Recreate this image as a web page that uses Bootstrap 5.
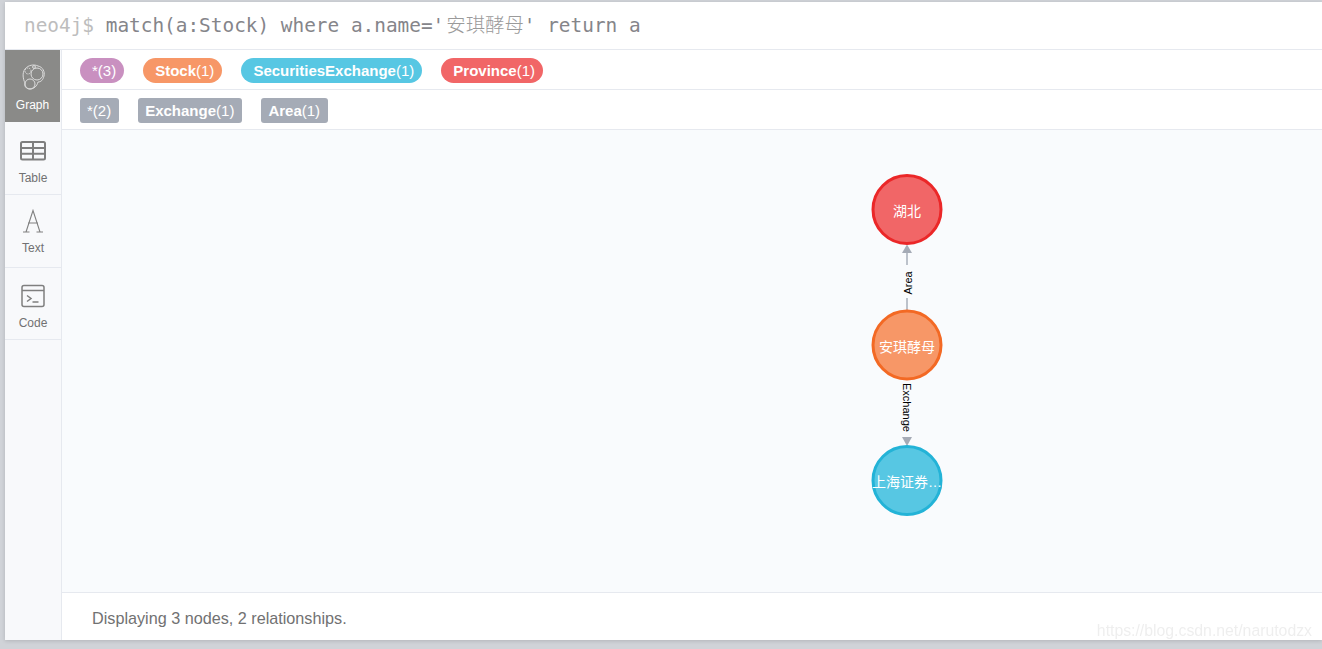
<!DOCTYPE html>
<html lang="en">
<head>
  <meta charset="UTF-8" />
  <title>Neo4j Browser</title>
  <link href="https://cdn.jsdelivr.net/npm/bootstrap@5.3.3/dist/css/bootstrap.min.css" rel="stylesheet"/>
  <style>
    html, body { height: 100%; overflow: hidden; }
    body { background: #d0d3d8; font-family: "Liberation Sans", Arial, sans-serif; }
    .shell { height: 649px; padding: 2px 0 9px 5px; }
    .frame { box-shadow: 0 1px 4px rgba(0,0,0,.15); background: #fff; }
    .side { width: 57px; background: #f8f9fb; border-right: 1px solid #e6e9ef; flex: none; }
    .side-tab { height: 73px; border-bottom: 1px solid #e6e9ef; color: #717172; font-size: 12px; line-height: 14px; padding-top: 16px; }
    .side-tab svg { display: block; height: 24px; margin-bottom: 8px; }
    .side-tab.on { height: 72px; margin-right: 1px; background: #8a8a88; color: #fff; border: 0; padding-top: 13px; }
    .side-tab.on svg { height: 29px; margin-bottom: 6px; }
    .side-tab.tab-table svg { margin-bottom: 9px; }
    .side-tab.tab-text { padding-top: 14px; }
    .side-tab.tab-code { height: 72px; }
    .query { height: 48px; border-bottom: 1px solid #e6e9ef; padding: 0 0 2px 19px; font-family: "DejaVu Sans Mono", "Noto Sans CJK SC", monospace; font-size: 19.4px; color: #85858a; white-space: pre; }
    .query .prompt { color: #bdbdbd; }
    .query .cjk { font-family: "Noto Sans CJK SC", sans-serif; font-weight: 300; font-size: 19.4px; margin-left: 2px; color: #9a9a9a; }
    .tagrow { height: 40px; border-bottom: 1px solid #e6e9ef; padding: 1px 0 0 18px; gap: 19px; }
    .tag { height: 25px; line-height: 25px; font-size: 15px; color: #fff; padding: 0 8px 0 12px; white-space: nowrap; border-radius: 13px; }
    .tag.rel { border-radius: 3px; padding: 0 8px 0 7px; background: #a5abb6; }
    .stage { flex: 1 1 0; min-height: 0; background: #f9fbfd; }
    .stage svg { display: block; width: 100%; height: 100%; }
    .foot { height: 48px; border-top: 1px solid #e6e9ef; padding: 3px 0 0 30px; font-size: 16.2px; color: #717172; }
    .wm { position: absolute; right: 10px; bottom: 9px; font-size: 15.8px; line-height: 18px; color: rgba(120,120,125,.13); white-space: nowrap; filter: blur(.4px); }
  </style>
</head>
<body>
  <div class="shell position-relative">
    <div class="frame d-flex flex-column h-100">
      <div class="query d-flex align-items-center flex-none"><span><span class="prompt">neo4j$</span> match(a:Stock) where a.name='<span class="cjk">安琪酵母</span>' return a</span></div>
      <div class="d-flex flex-grow-1" style="min-height:0">
        <div class="side d-flex flex-column">
          <div class="side-tab on d-flex flex-column align-items-center">
            <svg width="26" height="29" viewBox="0 0 26 29" fill="none" stroke="#dcdcdc" stroke-width="1">
              <path d="M5 6 C8 2 14 1 18 3 C23 4 25 9 24 13 C23 17 21 19 18 19 C17 23 14 26 10 26 C6 26 4 23 5 20 C3 16 2 10 5 6 Z"/>
              <circle cx="17" cy="11" r="6"/>
              <circle cx="10" cy="21" r="5"/>
              <circle cx="8" cy="8" r="3" stroke-dasharray="1.5 1"/>
              <circle cx="14" cy="4" r="1.4"/>
            </svg>
            <span>Graph</span>
          </div>
          <div class="side-tab tab-table d-flex flex-column align-items-center">
            <svg width="26" height="24" viewBox="0 0 26 24" fill="none" stroke="#7f7f7f" stroke-width="2">
              <rect x="1" y="4" width="24" height="17.500" rx="1.500"/>
              <path d="M1 10h24M1 15.800h24M13 4v17.500"/>
            </svg>
            <span>Table</span>
          </div>
          <div class="side-tab tab-text d-flex flex-column align-items-center">
            <svg width="22" height="24" viewBox="0 0 22 24" fill="none" stroke="#808080" stroke-width="1.100">
              <path d="M4 23L11 1.500L18 23M6 14h10M1 23h6.500M14.500 23H21"/>
            </svg>
            <span>Text</span>
          </div>
          <div class="side-tab tab-code d-flex flex-column align-items-center">
            <svg width="26" height="24" viewBox="0 0 26 24" fill="none" stroke="#7f7f7f" stroke-width="1.500">
              <rect x="2" y="1.500" width="22" height="21" rx="2"/>
              <path d="M2 6.500h22M7 11.500l4 3-4 3M12.500 18h6"/>
            </svg>
            <span>Code</span>
          </div>
        </div>
        <div class="flex-grow-1 d-flex flex-column" style="min-width:0">
          <div class="tagrow d-flex align-items-center">
            <span class="tag" style="background:#c990c0">*(3)</span>
            <span class="tag" style="background:#f79767"><b>Stock</b>(1)</span>
            <span class="tag" style="background:#57c7e3"><b>SecuritiesExchange</b>(1)</span>
            <span class="tag" style="background:#f16667"><b>Province</b>(1)</span>
          </div>
          <div class="tagrow d-flex align-items-center">
            <span class="tag rel">*(2)</span>
            <span class="tag rel"><b>Exchange</b>(1)</span>
            <span class="tag rel"><b>Area</b>(1)</span>
          </div>
          <div class="stage">
            <svg viewBox="62 130 1260 462" preserveAspectRatio="xMinYMin meet" font-family="'Liberation Sans','Noto Sans CJK SC',sans-serif">
              <path d="M907 253V265M907 298V310" stroke="#bcc2cb" stroke-width="2"/>
              <path d="M907 244.500L912 253H902Z" fill="#a5abb6"/>
              <path d="M907 446L902 437H912Z" fill="#a5abb6"/>
              <text transform="translate(911.500 294.500) rotate(-90)" font-size="11" fill="#000">Area</text>
              <text transform="translate(903 383) rotate(90)" font-size="11" fill="#000">Exchange</text>
              <circle cx="907" cy="209.500" r="34" fill="#f16667" stroke="#eb2728" stroke-width="3"/>
              <circle cx="907" cy="345" r="34" fill="#f79767" stroke="#f36924" stroke-width="3"/>
              <circle cx="907" cy="480.500" r="34" fill="#57c7e3" stroke="#23b3d7" stroke-width="3"/>
              <g fill="#fff" font-size="14" text-anchor="middle">
                <text x="907" y="216">湖北</text>
                <text x="907" y="352">安琪酵母</text>
                <text x="907" y="487">上海证券…</text>
              </g>
            </svg>
          </div>
          <div class="foot d-flex align-items-center">Displaying 3 nodes, 2 relationships.</div>
        </div>
      </div>
    </div>
    <div class="wm">https://blog.csdn.net/narutodzx</div>
  </div>
</body>
</html>
